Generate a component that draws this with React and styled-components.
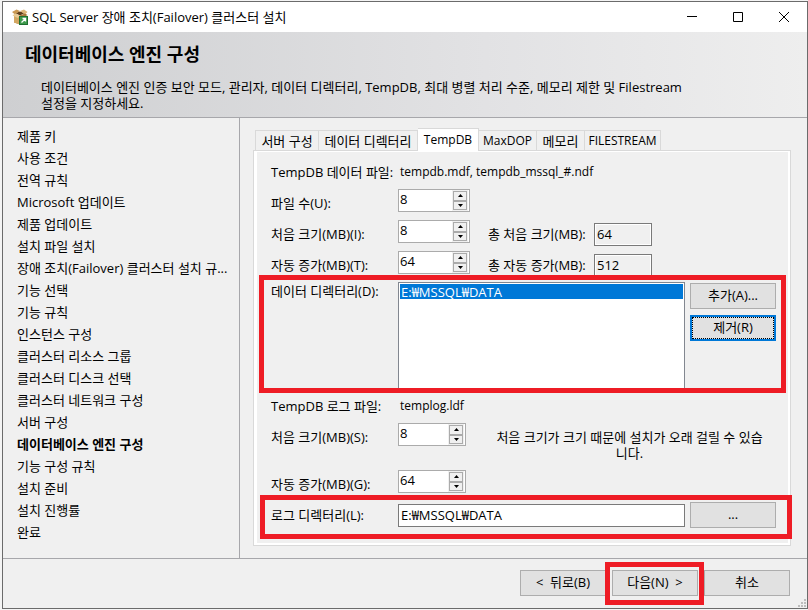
import React from 'react';
import styled, { createGlobalStyle } from 'styled-components';

const GlobalStyle = createGlobalStyle`
  * {
    box-sizing: border-box;
  }

  body {
    margin: 0;
    background: #f4f4f4;
    color: #000;
    font-family: "Open Sans", "Noto Sans CJK KR", sans-serif;
    font-size: 13px;
    line-height: 16px;
  }

  button, input, select {
    margin: 0;
    font: inherit;
    color: inherit;
    border-radius: 0;
  }
`

const Window = styled.div`
  display: flex;
  flex-direction: column;
  min-height: calc(100vh - 2px);
  margin: 1px 0 1px 2px;
  border: 1px solid #6b6b6b;
  background: #f0f0f0;
`

const TitleBar = styled.div`
  display: flex;
  align-items: center;
  height: 30px;
  padding-left: 9px;
  background: #fff;
`

const TitleText = styled.span`
  flex: 1;
  margin-left: 4px;
`

const WindowButton = styled.button`
  display: flex;
  align-items: center;
  justify-content: center;
  width: 46px;
  height: 30px;
  padding: 0;
  border: none;
  background: transparent;
`

const Header = styled.header`
  height: 86px;
  padding: 11px 112px 0 22px;
  border-bottom: 1px solid #a7a7ab;
  background: linear-gradient(to right, #cecfd1, #e2e2e4 60%, #eeeeee);
`

const Title = styled.h1`
  margin: 0;
  font-size: 18px;
  line-height: 22px;
`

const Description = styled.p`
  margin: 14px 0 0 16px;
  word-break: keep-all;
`

const Body = styled.div`
  display: flex;
  flex: 1;
`

const Steps = styled.ul`
  flex: none;
  width: 237px;
  margin: 0;
  padding: 7px 14px;
  border-right: 1px solid #a7a7ab;
  list-style: none;
`

const Step = styled.li`
  font-weight: ${props => props.$current ? 'bold' : 'normal'};
  line-height: 22px;
  white-space: nowrap;
`

const Main = styled.main`
  display: flex;
  flex-direction: column;
  flex: 1;
  padding: 10px 16px 12px 13px;
`

const Tabs = styled.div`
  display: flex;
  align-items: flex-end;
  padding-left: 2px;
`

const Tab = styled.button`
  width: ${props => props.$width}px;
  height: 20px;
  padding: 0;
  border: 1px solid #d9d9d9;
  border-width: 1px 1px 0 0;
  background: #f0f0f0;
  font-size: ${props => props.$latin ? '12px' : '13px'};
  white-space: nowrap;

  &:first-child {
    border-left-width: 1px;
  }

  &[aria-selected="true"] {
    position: relative;
    height: 23px;
    margin-bottom: -1px;
    background: #fff;
  }
`

const Panel = styled.div`
  flex: 1;
  border: 1px solid #d9d9d9;
  background: #fff;
  padding: 1px 2px 2px 3px;
`

const Form = styled.div`
  height: 100%;
  padding: 10px 12px 14px 14px;
  background: #f0f0f0;
`

const FileRow = styled.div`
  display: grid;
  grid-template-columns: 129px 1fr;
  margin-bottom: 7px;
  line-height: 20px;
`

const FileName = styled.span`
  font-size: 12px;
`

const SizeRow = styled.div`
  display: grid;
  grid-template-columns: 127px 90px 106px 58px;
  align-items: start;
  min-height: 31px;
`

const LogSizeRow = styled.div`
  display: grid;
  grid-template-columns: 127px 90px 1fr;
  align-items: start;
  min-height: ${props => props.$tall ? '47px' : '32px'};
`

const Label = styled.label`
  padding-top: 3px;
  line-height: 23px;
  white-space: nowrap;
`

const DirectoryRow = styled.div`
  position: relative;
  display: grid;
  grid-template-columns: 122px 1fr 86px;
  gap: 5px;
  align-items: ${props => props.$list ? 'start' : 'center'};
  margin-bottom: ${props => props.$list ? '6px' : '0'};
`

const DirectoryLabel = styled.label`
  line-height: 18px;
  white-space: nowrap;
`

const Highlight = styled.span`
  position: absolute;
  inset: ${props => props.$inset};
  border: 5px solid #ee1c25;
  pointer-events: none;
`

const ListBox = styled.select`
  width: 100%;
  height: 108px;
  padding: 1px;
  border: 1px solid #828790;
  background: #fff;
  outline: none;
  overflow: hidden;

  option {
    display: flex;
    align-items: center;
    height: 15px;
    min-height: 15px;
    padding: 0 1px;
  }

  option:checked {
    background: #0078d7 linear-gradient(#0078d7, #0078d7);
    color: #fff;
    -webkit-text-fill-color: #fff;
  }
`

const TextBox = styled.input`
  width: 100%;
  height: 23px;
  padding: 0 2px 2px;
  border: 1px solid #7a7a7a;
  background: #fff;

  &:read-only {
    margin-top: 3px;
    box-shadow: inset 0 0 0 1px #fff;
    background: #f0f0f0;
  }
`

const SpinBox = styled.div`
  display: flex;
  width: ${props => props.$narrow ? '68px' : '72px'};
  height: 23px;
  padding-right: 1px;
  border: 1px solid #ababab;
  background: #fff;
`

const SpinInput = styled.input`
  flex: 1;
  min-width: 0;
  height: 17px;
  padding: 0 1px;
  border: none;
  background: transparent;
`

const SpinButtons = styled.div`
  display: flex;
  flex-direction: column;
  padding: 1px;
  background: #f0f0f0;
`

const SpinButton = styled.button`
  display: flex;
  align-items: center;
  justify-content: center;
  width: 14px;
  flex: 1;
  padding: 0;
  border: 1px solid #ababab;
  background: #f0f0f0;
`

const Button = styled.button`
  width: 86px;
  height: 26px;
  padding: 0 0 2px;
  border: ${props => props.$focused ? '2px solid #0078d7' : '1px solid #adadad'};
  outline: ${props => props.$focused ? '1px dotted #000' : 'none'};
  outline-offset: -3px;
  background: #e1e1e1;
  white-space: pre;
`

const ButtonStack = styled.div`
  display: flex;
  flex-direction: column;
  gap: 6px;
  padding-top: 1px;
`

const Notice = styled.p`
  margin: 6px 9px 0 4px;
  text-align: center;
  word-break: break-all;
`

const Footer = styled.footer`
  position: relative;
  display: flex;
  justify-content: flex-end;
  gap: 6px;
  height: 50px;
  padding: 11px 17px 0;
  border-top: 1px solid #a7a7ab;
`

const NextWrap = styled.div`
  position: relative;
  height: 26px;
`

const Grip = styled.svg`
  position: absolute;
  right: 1px;
  bottom: 1px;
`

const steps = [
  '제품 키',
  '사용 조건',
  '전역 규칙',
  'Microsoft 업데이트',
  '제품 업데이트',
  '설치 파일 설치',
  '장애 조치(Failover) 클러스터 설치 규...',
  '기능 선택',
  '기능 규칙',
  '인스턴스 구성',
  '클러스터 리소스 그룹',
  '클러스터 디스크 선택',
  '클러스터 네트워크 구성',
  '서버 구성',
  '데이터베이스 엔진 구성',
  '기능 구성 규칙',
  '설치 준비',
  '설치 진행률',
  '완료'
]

const tabs = [
  { name: '서버 구성', width: 64 },
  { name: '데이터 디렉터리', width: 99 },
  { name: 'TempDB', width: 61, latin: true },
  { name: 'MaxDOP', width: 58, latin: true },
  { name: '메모리', width: 48 },
  { name: 'FILESTREAM', width: 76, latin: true }
]

const BoxIcon = () => (
  <svg width="16" height="16" viewBox="0 0 16 16">
    <path d="M2 5L8 6.500L14 5V13L8 15.500L2 13.500Z" fill="#b98a4a" />
    <path d="M2 5L8 6.500V15.500L2 13.500Z" fill="#d3a762" />
    <path d="M3 4L8 2.500L13 4L8 6.500Z" fill="#5f3f1c" />
    <path d="M0 3L4.500 0.500L8 2L3 5.500Z" fill="#c99852" />
    <path d="M8 2L12 0.500L15.500 3L13 5.500Z" fill="#dcb678" />
    <path d="M0.500 6.500L3 4.500L8 6.500L6 9Z" fill="#e8cb95" />
    <path d="M8 6.500L13 4.500L15.500 6L10.500 9Z" fill="#a87838" />
    <rect x="7.500" y="7.500" width="8" height="8" fill="#3d9a4c" stroke="#1f6f31" />
    <path d="M9.500 13.500L13 10M10.500 9.500H13.500V12.500" fill="none" stroke="#fff" strokeWidth="1.300" />
  </svg>
)

const Spinner = ({ id, value, narrow }) => {
  const [number, setNumber] = React.useState(value)

  return (
    <SpinBox $narrow={narrow}>
      <SpinInput id={id} value={number} onChange={(e) => setNumber(Number(e.target.value) || 0)} />
      <SpinButtons>
        <SpinButton aria-label="증가" onClick={() => setNumber(number + 1)}>
          <svg width="5" height="3" viewBox="0 0 5 3"><path d="M0 3L2.500 0L5 3Z" /></svg>
        </SpinButton>
        <SpinButton aria-label="감소" onClick={() => setNumber(Math.max(0, number - 1))}>
          <svg width="5" height="3" viewBox="0 0 5 3"><path d="M0 0H5L2.500 3Z" /></svg>
        </SpinButton>
      </SpinButtons>
    </SpinBox>
  )
}

const App = () => {
  const [activeTab, setActiveTab] = React.useState('TempDB')
  const [logDir, setLogDir] = React.useState('E:₩MSSQL₩DATA')

  return (
    <>
      <GlobalStyle />
      <Window>
        <TitleBar>
          <BoxIcon />
          <TitleText>SQL Server 장애 조치(Failover) 클러스터 설치</TitleText>
          <WindowButton aria-label="최소화">
            <svg width="10" height="10"><path d="M0 4.500H10" stroke="#000" /></svg>
          </WindowButton>
          <WindowButton aria-label="최대화">
            <svg width="10" height="10"><path d="M0.500 0.500H9.500V9.500H0.500Z" fill="none" stroke="#000" /></svg>
          </WindowButton>
          <WindowButton aria-label="닫기">
            <svg width="10" height="10"><path d="M0 0L10 10M10 0L0 10" stroke="#000" /></svg>
          </WindowButton>
        </TitleBar>

        <Header>
          <Title>데이터베이스 엔진 구성</Title>
          <Description>
            데이터베이스 엔진 인증 보안 모드, 관리자, 데이터 디렉터리, TempDB, 최대 병렬 처리 수준, 메모리 제한 및 Filestream 설정을 지정하세요.
          </Description>
        </Header>

        <Body>
          <Steps>
            {steps.map((step) => (
              <Step key={step} $current={step === '데이터베이스 엔진 구성'}>{step}</Step>
            ))}
          </Steps>

          <Main>
            <Tabs role="tablist">
              {tabs.map((tab) => (
                <Tab
                  key={tab.name}
                  role="tab"
                  $width={tab.width}
                  $latin={tab.latin}
                  aria-selected={activeTab === tab.name}
                  onClick={() => setActiveTab(tab.name)}
                >
                  {tab.name}
                </Tab>
              ))}
            </Tabs>

            <Panel>
              <Form>
                <FileRow>
                  <span>TempDB 데이터 파일:</span>
                  <FileName>tempdb.mdf, tempdb_mssql_#.ndf</FileName>
                </FileRow>
                <SizeRow>
                  <Label htmlFor="files">파일 수(U):</Label>
                  <Spinner id="files" value={8} />
                </SizeRow>
                <SizeRow>
                  <Label htmlFor="dataSize">처음 크기(MB)(I):</Label>
                  <Spinner id="dataSize" value={8} />
                  <Label htmlFor="totalSize">총 처음 크기(MB):</Label>
                  <TextBox id="totalSize" value="64" readOnly />
                </SizeRow>
                <SizeRow>
                  <Label htmlFor="dataGrowth">자동 증가(MB)(T):</Label>
                  <Spinner id="dataGrowth" value={64} />
                  <Label htmlFor="totalGrowth">총 자동 증가(MB):</Label>
                  <TextBox id="totalGrowth" value="512" readOnly />
                </SizeRow>

                <DirectoryRow $list>
                  <DirectoryLabel htmlFor="dataDirs">데이터 디렉터리(D):</DirectoryLabel>
                  <ListBox id="dataDirs" size="6" defaultValue="E:₩MSSQL₩DATA">
                    <option>E:₩MSSQL₩DATA</option>
                  </ListBox>
                  <ButtonStack>
                    <Button>추가(A)...</Button>
                    <Button $focused>제거(R)</Button>
                  </ButtonStack>
                  <Highlight $inset="-7px -10px -3px -12px" />
                </DirectoryRow>

                <FileRow>
                  <span>TempDB 로그 파일:</span>
                  <FileName>templog.ldf</FileName>
                </FileRow>
                <LogSizeRow $tall>
                  <Label htmlFor="logSize">처음 크기(MB)(S):</Label>
                  <Spinner id="logSize" value={8} narrow />
                  <Notice>처음 크기가 크기 때문에 설치가 오래 걸릴 수 있습니다.</Notice>
                </LogSizeRow>
                <LogSizeRow>
                  <Label htmlFor="logGrowth">자동 증가(MB)(G):</Label>
                  <Spinner id="logGrowth" value={64} narrow />
                </LogSizeRow>

                <DirectoryRow>
                  <DirectoryLabel htmlFor="logDir">로그 디렉터리(L):</DirectoryLabel>
                  <TextBox id="logDir" value={logDir} onChange={(e) => setLogDir(e.target.value)} />
                  <Button>...</Button>
                  <Highlight $inset="-7px -16px -11px -11px" />
                </DirectoryRow>
              </Form>
            </Panel>
          </Main>
        </Body>

        <Footer>
          <Button>{'<  뒤로(B)'}</Button>
          <NextWrap>
            <Button>{'다음(N)  >'}</Button>
            <Highlight $inset="-8px -6px -9px -7px" />
          </NextWrap>
          <Button>취소</Button>
          <Grip width="8" height="8" fill="#bdbdbd">
            <path d="M6 0h2v2h-2zM3 3h2v2h-2zM6 3h2v2h-2zM0 6h2v2h-2zM3 6h2v2h-2zM6 6h2v2h-2z" />
          </Grip>
        </Footer>
      </Window>
    </>
  )
}

export default App;
